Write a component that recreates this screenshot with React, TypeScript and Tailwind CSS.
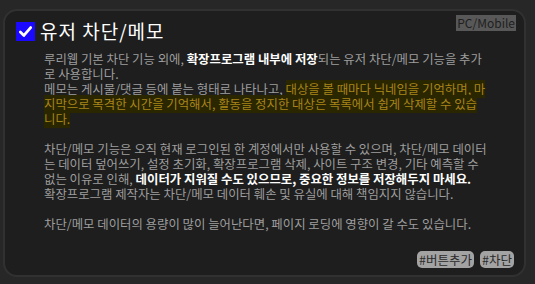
import React from "react";

const font = { fontFamily: '"Noto Sans CJK KR", "Noto Sans", sans-serif' };

function Hl(props: { children: React.ReactNode }) {
  return <span className="bg-[#2a2600] text-[#a8841a]">{props.children}</span>;
}

function B(props: { children: React.ReactNode }) {
  return <b className="font-bold text-white">{props.children}</b>;
}

export default function App() {
  return (
    <div className="h-[284px] w-[535px] overflow-hidden bg-[#272727] px-[3px] pt-[9px]" style={font}>
      <div className="relative h-[268px] w-[523px] rounded-[14px] border-2 border-[#313131] bg-[#1e1e1e]">
        {/* header */}
        <div className="flex items-center gap-[5px] pl-[11px] pt-[9px]">
          <span className="flex h-[19px] w-[19px] items-center justify-center bg-[#1a08ff]">
            <svg viewBox="0 0 16 16" className="h-[15px] w-[15px]">
              <path d="M2.5 8.5 L6.3 12.2 L13.5 3.8" fill="none" stroke="white" strokeWidth="3" strokeLinecap="round" strokeLinejoin="round" />
            </svg>
          </span>
          <span className="text-[19px] leading-[22px] tracking-[1px] text-white">유저 차단/메모</span>
        </div>
        <span className="absolute right-[8px] top-[4px] bg-[#585858] px-[1px] text-[12px] leading-[16px] text-[#1f1f1f]">PC/Mobile</span>

        {/* body */}
        <div className="whitespace-nowrap pl-[39px] pt-[10px] text-[12.4px] leading-[15px] text-[#9d9d9d]">
          루리웹 기본 차단 기능 외에, <B>확장프로그램 내부에 저장</B>되는 유저 차단/메모 기능을 추가<br />
          로 사용합니다.<br />
          메모는 게시물/댓글 등에 붙는 형태로 나타나고, <Hl>대상을 볼 때마다 닉네임을 기억하며, 마<br />
          지막으로 목격한 시간을 기억해서, 활동을 정지한 대상은 목록에서 쉽게 삭제할 수 있습<br />
          니다.</Hl>
          <br />
          <br />
          차단/메모 기능은 오직 현재 로그인된 한 계정에서만 사용할 수 있으며, 차단/메모 데이터<br />
          는 데이터 덮어쓰기, 설정 초기화, 확장프로그램 삭제, 사이트 구조 변경, 기타 예측할 수<br />
          없는 이유로 인해, <B>데이터가 지워질 수도 있으므로, 중요한 정보를 저장해두지 마세요.</B><br />
          확장프로그램 제작자는 차단/메모 데이터 훼손 및 유실에 대해 책임지지 않습니다.<br />
          <br />
          차단/메모 데이터의 용량이 많이 늘어난다면, 페이지 로딩에 영향이 갈 수도 있습니다.
        </div>

        {/* tags */}
        <div className="flex justify-end gap-[6px] pr-[10px] pt-[19px]">
          <span className="rounded-[5px] bg-[#a3a3a3] px-[2px] text-[12.5px] leading-[17px] text-[#2a2a2a]">#버튼추가</span>
          <span className="rounded-[5px] bg-[#a3a3a3] px-[2px] text-[12.5px] leading-[17px] text-[#2a2a2a]">#차단</span>
        </div>
      </div>
    </div>
  );
}
